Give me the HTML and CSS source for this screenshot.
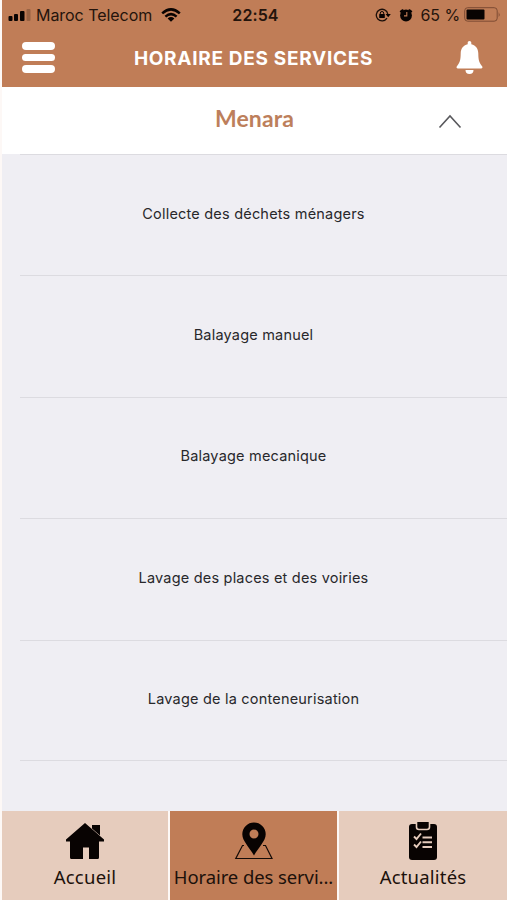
FILE: index.html
```html
<!DOCTYPE html>
<html lang="fr">
<head>
<meta charset="utf-8">
<title>Horaire des services</title>
<link rel="stylesheet" href="styles.css">
</head>
<body>
<div class="app">
  <header class="top">
    <div class="status">
      <div class="carrier">
        <svg class="signal" width="24" height="14" viewBox="0 0 24 14"><rect x=".5" y="8" width="4" height="5" rx="1"/><rect x="6" y="6" width="4" height="7" rx="1"/><rect x="12" y="3" width="4.5" height="10" rx="1"/><rect x="18.5" y="1" width="4" height="12" rx="1" opacity=".22"/></svg>
        <span class="carrier-name">Maroc Telecom</span>
        <svg width="20" height="14" viewBox="0 0 20 14"><g fill="none" stroke="#080302" stroke-width="2.5"><path d="M1.2 5.4Q10-2.6 18.8 5.4"/><path d="M4.4 8.6Q10 3.6 15.6 8.6"/></g><path d="M6.6 10.5Q10 7.7 13.4 10.5L10 13.8Z"/></svg>
      </div>
      <span class="time">22:54</span>
      <div class="indicators">
        <svg width="16" height="14" viewBox="0 0 16 14"><path d="M12 10.200A5.800 5.800 0 1 1 12.800 6" fill="none" stroke="#1c0f09" stroke-width="1.300"/><path d="M10.600 6H15.800l-2.600 3.300Z"/><rect x="4.200" y="6" width="5.600" height="4" rx=".6"/><path d="M5.300 6.500V5.200a1.700 1.700 0 0 1 3.400 0v1.300" fill="none" stroke="#080302"/></svg>
        <svg class="alarm" width="14" height="14" viewBox="0 0 14 14"><circle cx="7" cy="7.500" r="5.900"/><path d="M.6 3.600Q1.600 1.500 4 1l.8 1.500L2 5ZM13.400 3.600Q12.400 1.500 10 1l-.8 1.500L12 5Z"/><path d="M7.800 4v3.900H5" fill="none" stroke="#c17e57" stroke-width="1.100"/></svg>
        <span class="percent">65 %</span>
        <svg width="37" height="15" viewBox="0 0 37 15"><rect x=".7" y=".7" width="32.500" height="13.500" rx="3" fill="none" stroke="#7d4b33" stroke-width="1"/><rect x="2.500" y="2.500" width="18" height="10" rx="1"/><path d="M34.700 5q1.800 2.500 0 5Z" fill="#7d4b33"/></svg>
      </div>
    </div>
    <div class="bar">
      <div class="menu"><i></i><i></i><i></i></div>
      <h1>HORAIRE DES SERVICES</h1>
      <svg class="bell" width="27" height="34" viewBox="0 0 27 34"><path fill="#fff" d="M13.500 0c1 0 1.800.8 1.800 1.800v1.500C20 4.300 22.200 8 22.300 12.500c.1 7 1 9.500 3.800 12.700.8 1 .3 2.300-1 2.300H1.900c-1.300 0-1.800-1.300-1-2.300 2.800-3.200 3.700-5.700 3.800-12.700C4.800 8 7 4.300 11.700 3.300V1.800C11.700.8 12.500 0 13.500 0ZM9.500 28.900h8a4 4 0 0 1-8 0Z"/></svg>
    </div>
  </header>
  <section class="zone">
    <h2>Menara</h2>
    <svg class="chevron" width="24" height="15" viewBox="0 0 24 15"><path d="M1.500 13.500 12 2l10.500 11.500" fill="none" stroke="#58585c" stroke-width="1.600"/></svg>
  </section>
  <ul class="services">
    <li>Collecte des déchets ménagers</li>
    <li>Balayage manuel</li>
    <li>Balayage mecanique</li>
    <li>Lavage des places et des voiries</li>
    <li>Lavage de la conteneurisation</li>
  </ul>
  <nav class="tabs">
    <div class="tab">
      <svg width="40" height="38" viewBox="0 0 40 38"><path d="M20 1 39 17.500V19.500H34V35.500q0 1.500-1.500 1.500H24V25.500H18V37H6.500Q5 37 5 35.500V19.500H1V17.500Z"/><path d="M27 3h8v10.500L27 6.500Z"/></svg>
      <span class="home-label">Accueil</span>
    </div>
    <div class="tab active">
      <svg width="40" height="38" viewBox="0 0 40 38"><path d="M10 23.500H8.500L1.800 36.500H38L31.500 23.500H29" fill="none" stroke="#140b07" stroke-width="1.200"/><path fill-rule="evenodd" d="M20 .5A11.700 11.700 0 0 1 31.700 12.200C31.700 19 25 24.500 20 33.500 15 24.500 8.300 19 8.300 12.200A11.700 11.700 0 0 1 20 .5Zm0 7a4.500 4.500 0 1 0 0 9 4.500 4.500 0 0 0 0-9Z"/></svg>
      <span class="schedule-label">Horaire des servi...</span>
    </div>
    <div class="tab">
      <svg width="40" height="38" viewBox="0 0 40 38"><path d="M9 2h22q3 0 3 3v30q0 3-3 3H9q-3 0-3-3V5q0-3 3-3Z"/><path d="M13.500-1h13v6q0 2.500-2.500 2.500h-8q-2.500 0-2.500-2.500Z" stroke="#e6ccbd" stroke-width="1.600"/><g fill="none" stroke="#e6ccbd" stroke-width="1.900"><path d="M19.500 15.500H29M19.500 20.300H29M19.500 25H29M11 14.500l2.500 2.500 4.500-5.500M11 22.500l2.500 2.500 4.500-5.500"/></g></svg>
      <span class="news-label">Actualités</span>
    </div>
  </nav>
</div>
</body>
</html>
```
FILE: styles.css
```css
* { box-sizing: border-box; }
body { margin: 0; background: #fdf8f6; }
.app {
  display: flex;
  flex-direction: column;
  width: 507px;
  height: 900px;
  padding-left: 2px;
  overflow: hidden;
  font-family: Inter, "Liberation Sans", sans-serif;
}
svg { display: block; fill: #080302; flex: none; }
span, h1, h2 { white-space: nowrap; }
.top { height: 87px; flex: none; background: #c07d57; color: #24140c; }
.status {
  display: grid;
  grid-template-columns: 1fr auto 1fr;
  align-items: center;
  height: 29px;
  padding: 0 6px;
  font-size: 16px;
}
.carrier, .indicators { display: flex; align-items: center; }
.signal { margin-right: 4px; }
.carrier-name { margin-right: 9px; letter-spacing: -.05px; }
.time { padding-left: 2px; font-weight: 600; letter-spacing: .1px; }
.indicators { justify-content: flex-end; }
.alarm { margin: 0 8px; }
.percent { margin-right: 4px; letter-spacing: -.1px; }
.bar { display: flex; align-items: center; justify-content: space-between; height: 57px; padding: 0 24px 0 20px; }
.menu { display: flex; flex-direction: column; gap: 4px; width: 33px; }
.menu i { height: 7.500px; border-radius: 4px; background: #fff; }
h1 { margin: 2px 4px 0 0; color: #fff; font: 700 19px/26px Inter, sans-serif; letter-spacing: .7px; }
.zone {
  display: grid;
  grid-template-columns: 1fr auto 1fr;
  align-items: center;
  height: 67px;
  flex: none;
  background: #fff;
}
h2 { grid-column: 2; margin: -5px 0 0; color: #bd7f5c; font: 700 23px/30px Lato, sans-serif; letter-spacing: .1px; }
.chevron { justify-self: end; margin: 2px 45px 0 0; }
.services { flex: 1; margin: 0; padding: 0 0 0 18px; list-style: none; background: #efeef3; }
.services li {
  display: flex;
  justify-content: center;
  align-items: center;
  height: 121.400px;
  padding: 0 20px 4px 0;
  border-top: 1px solid #dcdbe0;
  color: #28282b;
  font-size: 14.500px;
  letter-spacing: .2px;
}
.services li:last-child { border-bottom: 1px solid #dcdbe0; }
.tabs { display: grid; grid-template-columns: 166px 167px 1fr; gap: 2px; height: 89px; flex: none; }
.tab {
  display: flex;
  flex-direction: column;
  align-items: center;
  padding-top: 11px;
  background: #e6ccbd;
  color: #1c110b;
  font: 400 18.500px/26px "Noto Sans", sans-serif;
}
.tab span { margin-top: 4px; }
.tab .home-label { letter-spacing: .25px; }
.tab .schedule-label { letter-spacing: -.1px; }
.tab .news-label { letter-spacing: .2px; }
.tab.active { background: #c07d57; }
```
